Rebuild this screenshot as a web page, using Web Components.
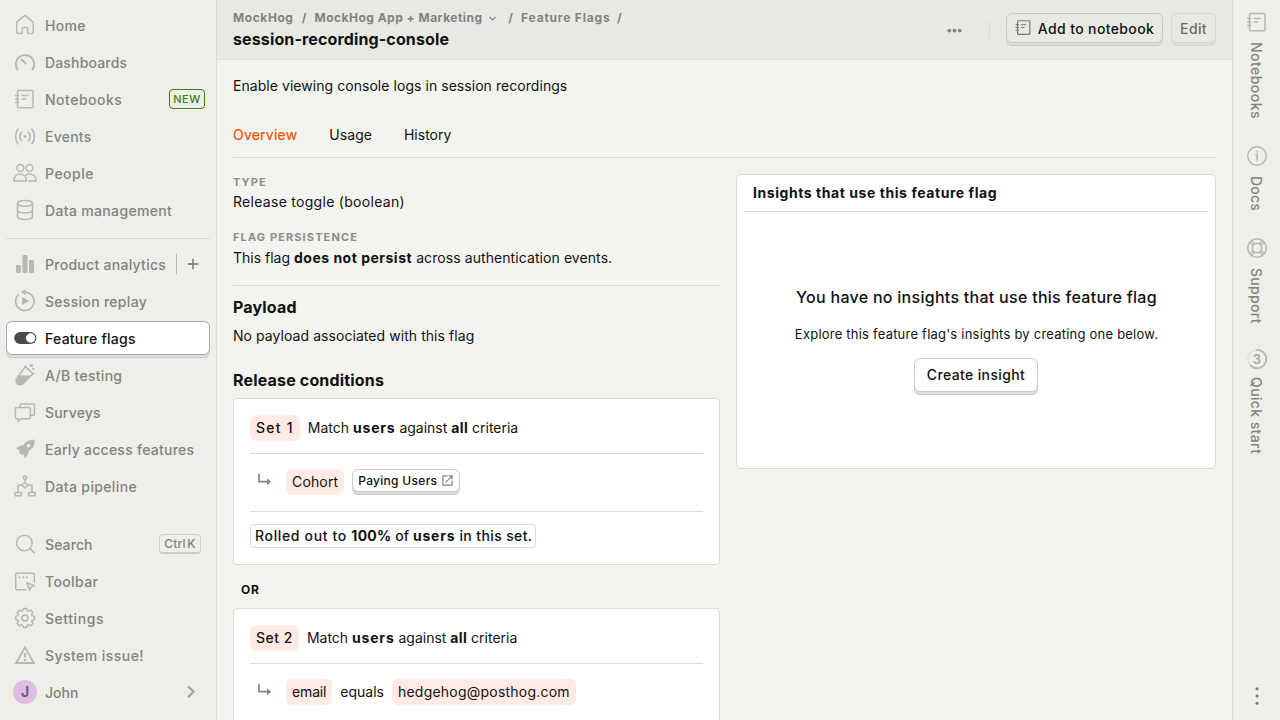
<!DOCTYPE html>
<html lang="en">
<head>
<meta charset="utf-8">
<title>session-recording-console</title>
<style>
html,body{margin:0;height:100%;overflow:hidden}
body{font-family:Inter,"Liberation Sans",sans-serif;font-size:14px;line-height:20px;color:#111;
--muted:#82837e;--icon:#b6b8b2;--border:#dadbd2;--orange:#f54e00;--side:#eeefe9}
</style>
</head>
<body>
<flag-app></flag-app>
<script>
const ICONS={
home:'<path d="M12 2.4 3.7 9.2v10.3q0 .9.9.9h3.8q.9 0 .9-.9v-4.1q0-.9.9-.9h3.6q.9 0 .9.9v4.1q0 .9.9.9h3.8q.9 0 .9-.9V9.2z"/>',
dash:'<path stroke-width="1.9" d="M4.6 19.6a9.2 9.2 0 1 1 14.8 0"/><path stroke-width="2.1" d="m8.6 9.4 3.9 3.9"/>',
note:'<rect x="4.5" y="3.5" width="15.5" height="17.3" rx=".9"/><path d="M2.6 8.4h3.2M2.6 12h3.2M2.6 15.5h3.2M9.2 8.5h5.8M9.2 12h3.5"/>',
events:'<circle cx="12" cy="12.5" r="1.5" fill="currentColor" stroke="none"/><path stroke-width="1.6" d="M5 5.2c-3.2 4.3-3.2 10.3 0 14.6M19 5.2c3.2 4.3 3.2 10.3 0 14.6M8.5 8.4c-2.2 2.2-2.2 6 0 8.2M15.5 8.4c2.2 2.2 2.2 6 0 8.2"/>',
people:'<circle cx="7.4" cy="7" r="3.4"/><circle cx="16.5" cy="7" r="3.4"/><path d="M.9 20.1c0-4.800 2.900-7 6.200-7s6.200 2.200 6.200 7zM12.600 14.300c1-.800 2.400-1.200 4-1.200 3.500 0 6.500 2.400 6.500 7H16"/>',
db:'<ellipse cx="12" cy="5.300" rx="7.500" ry="2.900"/><path d="M4.500 5.300v13c0 1.900 3.300 3.100 7.500 3.100s7.500-1.200 7.500-3.100v-13M4.500 11.700c0 1.900 3.300 3.100 7.500 3.100s7.500-1.200 7.500-3.100"/>',
bars:'<g fill="currentColor" stroke="none"><rect x="3" y="13" width="4.900" height="8" rx="1.200"/><rect x="9.500" y="3" width="5" height="18" rx="1.200"/><rect x="16" y="8" width="5" height="13" rx="1.200"/></g>',
replay:'<path stroke-width="1.700" d="M10.500 3.200a9.200 9.200 0 1 1-5.200 2.600"/><path fill="currentColor" stroke="none" d="M12.600 0v6.200L8 3.100zM9 7.900l7.300 4.100L9 16z"/>',
toggle:'<rect x="1.200" y="5.900" width="22.200" height="12.200" rx="6.100" fill="currentColor" stroke="none"/><circle cx="17.600" cy="12" r="4.700" fill="#fff" stroke="none"/>',
tube:'<path d="m12.400 3.600 7.500 7.200-9.600 9.800a4.100 4.100 0 0 1-6-5.800zM11.700 3.800l1-.9M19.400 11.500l1.500-1.200"/><path fill="currentColor" stroke="none" d="M6.300 12.600H18l-7.300 8a4.300 4.300 0 0 1-6.400-6z"/><circle cx="18.400" cy="2.500" r="1.600" fill="currentColor" stroke="none"/><circle cx="20.300" cy="6" r="1.100" fill="currentColor" stroke="none"/>',
survey:'<path d="M3.400 7.600h12.900q1 0 1 1v9.200q0 1-1 1H8.200l-3.100 2.300v-2.300H3.400q-1 0-1-1V8.600q0-1 1-1z"/><path d="M7.200 7.500V4.900q0-1 1-1h12.200q1 0 1 1v9.300q0 1-1 1h-3"/>',
rocket:'<path fill="currentColor" fill-rule="evenodd" stroke="none" d="M21.700 2.800c-5.500-.1-9.200 1.500-11.300 5.500-3 0-5 .9-7.300 3.800 1.500.2 2.700.6 3.700 1.300l-.8 2 2.600 2.600 2-.7c.5 1.200.7 2.400 1 4 2.700-2.100 3.800-4.300 4.100-7.500 4.600-2.400 6.200-5.600 6-11zM15.400 7a1.700 1.700 0 1 1 0 3.400 1.700 1.700 0 0 1 0-3.400z"/>',
pipe:'<circle cx="12" cy="3.600" r="1.700"/><path d="M12 5.300v3.400M12 8.500l3.400 2.700-3.400 2.700-3.400-2.700zM8.600 11.300H5v7M15.400 11.300H19v7M1.900 18.400h6.400v3.300H1.900zM15.700 18.400h6.400v3.300h-6.400z"/>',
search:'<circle cx="11.400" cy="11" r="7.800"/><path stroke-width="1.700" d="m17 16.700 4 3.900"/>',
toolbar:'<path d="M21.300 13.200V5.100q0-.9-.9-.9H3.600q-.9 0-.9.900v14.700q0 .9.900.9H12.500"/><path stroke-width="1.600" d="m13.800 13.800 7.500 2.700-3.200 1.400-1.400 3.200z"/><path stroke-width="1.700" stroke-linecap="butt" d="M5.600 8.400h1.700M9.300 8.400h1.700M13 8.400h1.700"/>',
gear:'<path d="M10.300 2.600h3.400l.7 2.300 1 .4 2.100-1.200 2.400 2.400-1.200 2.100.4 1 2.300.7v3.400l-2.300.7-.4 1 1.200 2.100-2.400 2.400-2.100-1.200-1 .4-.7 2.300h-3.400l-.7-2.300-1-.4-2.100 1.200-2.400-2.400 1.200-2.100-.4-1-2.300-.7v-3.400l2.300-.7.4-1-1.200-2.100 2.400-2.400 2.100 1.200 1-.4z"/><circle cx="12" cy="12" r="3"/>',
warn:'<path stroke-linejoin="miter" stroke-width="1.800" d="M12 4.400 3.100 20h17.800z"/><path stroke-width="2.100" stroke-linecap="butt" d="M12 10v4.500M12 16v2"/>',
right:'<path stroke-width="2.300" stroke-linecap="butt" stroke-linejoin="miter" d="m9.100 6.400 5.500 5.400-5.500 5.400"/>',
down:'<path stroke-width="3" stroke-linecap="butt" stroke-linejoin="miter" d="m4 8 8 8 8-8"/>',
plus:'<path stroke-width="2" stroke-linecap="butt" d="M12 6.300v11.400M6.300 12h11.400"/>',
dots:'<g fill="currentColor" stroke="none"><circle cx="3.700" cy="12" r="3"/><circle cx="12" cy="12" r="3"/><circle cx="20.300" cy="12" r="3"/></g>',
vdots:'<g fill="currentColor" stroke="none"><circle cx="12" cy="4.800" r="1.500"/><circle cx="12" cy="12" r="1.500"/><circle cx="12" cy="19.200" r="1.500"/></g>',
sub:'<path stroke-width="2.300" stroke-linecap="butt" stroke-linejoin="miter" d="M5.300 4v10.200h12"/><path fill="currentColor" stroke="none" d="m16 9.500 5.500 4.700-5.500 4.700z"/>',
open:'<path stroke-width="2.200" stroke-linecap="butt" stroke-linejoin="miter" d="M12 3.500H3.500v17h17V12M14 3.500h6.500V10M20.500 3.500 8.500 15.500"/>',
info:'<circle cx="12" cy="12" r="9.300"/><path stroke-width="1.700" stroke-linecap="butt" d="M10.300 10.700h1.900v6M12.200 7v1.800"/>',
support:'<circle cx="12" cy="12" r="9.300"/><circle cx="12" cy="12" r="4.700"/><path stroke-width="1.400" d="m4.600 6.400 3.300 2.900M6.500 4.500l2.900 3.300M19.400 6.400l-3.300 2.900M17.500 4.500l-2.900 3.300M4.600 17.600l3.300-2.900M6.500 19.500l2.900-3.300M19.400 17.600l-3.300-2.900M17.500 19.500l-2.900-3.300"/>',
ring:'<circle cx="12" cy="12" r="9.200" stroke="#dddfd8" stroke-width="1.500"/><path stroke-width="1.800" d="M12 2.800a9.200 9.200 0 1 1-6.500 15.700"/>'
};
function define(name,css,html){
  customElements.define(name,class extends HTMLElement{
    constructor(){super();this.attachShadow({mode:'open'});}
    connectedCallback(){
      const body=typeof html==='function'?html(this):html;
      this.shadowRoot.innerHTML='<style>*{box-sizing:border-box}'+css+'</style>'+body;
    }
  });
}
define('ui-icon',':host{display:block;flex:none;width:24px;height:24px}svg{display:block;width:100%;height:100%;overflow:visible}',
  e=>'<svg viewBox="0 0 24 24" fill="none" stroke="currentColor" stroke-width="1.5" stroke-linecap="round" stroke-linejoin="round">'+ICONS[e.getAttribute('name')]+'</svg>');
/* track: extra letter-spacing in px for a run of text */
define('t-x',':host{display:inline}',e=>{e.style.letterSpacing=(e.getAttribute('s')||0)+'px';return '<slot></slot>';});
define('nav-item',`:host{display:block;height:37px;padding-top:1px;box-sizing:border-box;color:var(--muted);font-weight:500}
.b{display:flex;align-items:center;height:34px;padding:0 6px;gap:8px;border:1px solid transparent;border-radius:6px}
ui-icon{color:var(--icon)} .l{flex:1;white-space:nowrap;padding-top:1px}
:host([active]) .b{background:#fff;border-color:#a9a9a9;box-shadow:0 2px 0 #e0dddf,0 3px 0 #c8c7c6}
:host([active]){color:#111}:host([active]) ui-icon{color:#4b4b4b}
.a{width:24px;height:24px;border-radius:50%;background:#dfbde3;color:#78567d;display:flex;align-items:center;justify-content:center;font-weight:700}`,
  e=>'<div class="b">'+(e.getAttribute('avatar')?'<span class="a">'+e.getAttribute('avatar')+'</span>':'<ui-icon name="'+e.getAttribute('icon')+'"></ui-icon>')+'<span class="l" style="letter-spacing:'+(e.getAttribute('track')||.2)+'px"><slot></slot></span><slot name="end"></slot></div>');
define('app-sidebar',`:host{display:flex;flex-direction:column;width:217px;flex:none;background:var(--side);border-right:1px solid var(--border);padding:7px 6px 9px;box-sizing:border-box}
hr{border:0;border-top:1px solid var(--border);margin:9px 0 7px;width:100%}
.bottom{margin-top:21px}
.new{box-sizing:border-box;width:36px;height:20px;border:1px solid #388600;color:#388600;border-radius:4px;font-size:11px;line-height:18px;text-align:center;letter-spacing:.45px;margin:0 -2px 0 0}
.key{box-sizing:border-box;width:42px;height:20px;border:1px solid #cccdc8;border-bottom-width:2px;border-radius:4px;font-size:12px;line-height:18px;text-align:center;letter-spacing:.2px;margin:0 2px 0 0;white-space:nowrap;word-spacing:-2px}
.add{display:flex;align-items:center;border-left:1px solid #b9bab5;height:20px;padding-left:5px;margin-right:-1px}
.add ui-icon{width:22px;height:22px;color:#8b8c87}
.chev{color:#a5a6a1}`,
`<nav-item icon="home" track=".3">Home</nav-item><nav-item icon="dash" track=".16">Dashboards</nav-item>
<nav-item icon="note" track=".5">Notebooks<span slot="end" class="new">NEW</span></nav-item>
<nav-item icon="events" track=".25">Events</nav-item><nav-item icon="people" track=".5">People</nav-item><nav-item icon="db" track=".34">Data management</nav-item>
<hr><nav-item icon="bars" track=".28">Product analytics<span slot="end" class="add"><ui-icon name="plus"></ui-icon></span></nav-item>
<nav-item icon="replay" track=".3">Session replay</nav-item><nav-item icon="toggle" track=".26" active>Feature flags</nav-item>
<nav-item icon="tube" track=".3">A/B testing</nav-item><nav-item icon="survey">Surveys</nav-item>
<nav-item icon="rocket" track=".26">Early access features</nav-item><nav-item icon="pipe" track=".36">Data pipeline</nav-item>
<div class="bottom"><nav-item icon="search" track=".1">Search<span slot="end" class="key">Ctrl K</span></nav-item>
<nav-item icon="toolbar" track=".38">Toolbar</nav-item><nav-item icon="gear" track=".55">Settings</nav-item><nav-item icon="warn" track=".45">System issue!</nav-item>
<nav-item avatar="J" track=".05">John<ui-icon slot="end" class="chev" name="right"></ui-icon></nav-item></div>`);
define('chrome-button',`:host{display:flex;align-items:center;justify-content:center;gap:6px;box-sizing:border-box;flex:none;height:34px;border:1px solid var(--edge,#c9c8c9);border-radius:6px;box-shadow:0 2px 0 #e0dddf,0 3px 0 var(--edge,#c9c8c9);font-weight:500;white-space:nowrap;background:var(--face,#fff)}`,'<slot></slot>');
define('top-bar',`:host{display:flex;height:60px;box-sizing:border-box;background:#e8e9e3;border-bottom:1px solid #dfe0d9;padding:0 16px;align-items:flex-start}
.t{flex:1;padding-top:8px}.c{display:flex;align-items:center;height:20px;font-size:12px;font-weight:700;color:var(--muted);white-space:nowrap}
.c i{font-style:normal;width:21px;text-align:center}.c ui-icon{width:9px;height:9px;margin:0 3.500px 0 5px}
h1{margin:1px 0 0;font-size:16px;line-height:20px;font-weight:700;letter-spacing:.13px}
.r{display:flex;align-items:center;margin-top:13px;height:30px}.r>ui-icon{width:15px;height:15px;color:#83847f;margin-top:4px}
.v{width:1px;height:17px;background:#d9dad4;margin:2px 16px 0 27px}
chrome-button{height:30px;--face:#e8e9e3;padding-top:2px}`,
`<div class="t"><div class="c"><t-x s=".58">MockHog</t-x><i>/</i><t-x s=".48">MockHog App + Marketing</t-x><ui-icon name="down"></ui-icon><i>/</i><t-x s=".8">Feature Flags</t-x><i style="width:18px">/</i></div><h1>session-recording-console</h1></div>
<div class="r"><ui-icon name="dots"></ui-icon><span class="v"></span>
<chrome-button style="width:157px"><ui-icon name="note" style="width:19px;height:19px;color:#777873;margin:-4px -1px 0 -1px"></ui-icon><t-x s=".38">Add to notebook</t-x></chrome-button>
<chrome-button style="width:45px;margin-left:8px;--edge:#d7d7d3;color:#6c6d69"><t-x s=".35">Edit</t-x></chrome-button></div>`);
define('flag-tabs',':host{display:flex;gap:32px;height:44px;box-sizing:border-box;border-bottom:1px solid var(--border);padding-top:11px}.on{color:var(--orange);-webkit-text-stroke:.2px}','<t-x class="on" s=".22">Overview</t-x><t-x s=".04">Usage</t-x><t-x>History</t-x>');
define('flag-tag',':host{display:block;background:#ffebe4;border-radius:6px;padding:3px 6px;height:26px;box-sizing:border-box;white-space:nowrap}','<slot></slot>');
define('condition-set',`:host{display:block;box-sizing:border-box;background:#fff;border:1px solid var(--border);border-radius:4px;padding:16px}
.h{display:flex;align-items:center;gap:8px;height:38px;padding-bottom:12px}
flag-tag{font-weight:500}.m{white-space:nowrap}
.q{display:flex;align-items:flex-start;height:58px;gap:8px;border-top:1px solid var(--border);padding:15px 0 0 5px}
.q ui-icon{width:18px;height:18px;color:#86868a;margin:2px 5px 0 0}
.f{border-top:1px solid var(--border);padding-top:12px}`,
  e=>'<div class="h"><flag-tag><t-x s="'+e.getAttribute('track')+'">'+e.getAttribute('label')+'</t-x></flag-tag><span class="m">Match <b><t-x s=".8">users</t-x></b> against <b><t-x s=".35">all</t-x></b> criteria</span></div><div class="q"><ui-icon name="sub"></ui-icon><slot></slot></div><div class="f"><slot name="rollout"></slot></div>');
define('insight-card',`:host{display:flex;flex-direction:column;align-items:center;width:480px;height:295px;flex:none;box-sizing:border-box;background:#fff;border:1px solid var(--border);border-radius:6px;padding:0 8px}
h2{align-self:stretch;margin:0;height:37px;line-height:36px;padding-left:8px;font-size:14px;letter-spacing:.56px;border-bottom:1px solid var(--border);font-weight:700}
h3{margin:75px 0 0;font-size:16px;line-height:20px;font-weight:500;letter-spacing:.28px;padding-left:1px}
p{margin:17px 0 14px;font-size:13px;letter-spacing:.22px;padding-left:1px}`,
`<h2>Insights that use this feature flag</h2><h3>You have no insights that use this feature flag</h3><p>Explore this feature flag's insights by creating one below.</p><chrome-button style="width:124px"><t-x s=".37">Create insight</t-x></chrome-button>`);
define('flag-details',`:host{display:block;width:487px}
h4{margin:0;font-size:11px;line-height:16px;letter-spacing:1.12px;color:#8b8c88;font-weight:700}
hr{border:0;border-top:1px solid var(--border);margin:17px 0 11px}h2{margin:0;font-size:16px;line-height:20px;font-weight:700;letter-spacing:.17px}
.or{font-size:12px;font-weight:700;padding:15px 0 8px 8px;height:43px;letter-spacing:.8px}
.roll{display:inline-block;height:24px;width:286px;line-height:22px;border:1px solid var(--border);border-radius:4px;padding:0 4px;font-weight:500;white-space:nowrap}
chrome-button{height:23px;width:108px;font-size:12px}`,
`<h4>TYPE</h4><div style="margin:2px 0 17px;letter-spacing:.29px">Release toggle (boolean)</div><h4>FLAG PERSISTENCE</h4><div style="margin-top:3px">This flag <b><t-x s=".5">does not persist</t-x></b><t-x s=".08"> across authentication events.</t-x></div>
<hr><h2>Payload</h2><div style="margin:9px 0 24px;letter-spacing:.06px">No payload associated with this flag</div><h2 style="margin-bottom:8px">Release conditions</h2>
<condition-set label="Set 1" track="1.25" style="height:167px"><flag-tag><t-x s=".15">Cohort</t-x></flag-tag><chrome-button><t-x s=".3">Paying Users</t-x><ui-icon name="open" style="width:13px;height:13px;color:#85858a;margin-left:-2px"></ui-icon></chrome-button><span slot="rollout" class="roll"><t-x s=".65">Rolled out to </t-x><b><t-x s=".3">100%</t-x></b> of <b><t-x s=".8">users</t-x></b><t-x s=".38"> in this set.</t-x></span></condition-set>
<div class="or">OR</div>
<condition-set label="Set 2" track=".5"><flag-tag><t-x s="-.15">email</t-x></flag-tag><span style="padding-top:3px">equals</span><flag-tag><t-x s=".22">hedgehog@posthog.com</t-x></flag-tag></condition-set>`);
define('side-panel',`:host{display:flex;flex-direction:column;align-items:center;width:48px;flex:none;box-sizing:border-box;border-left:1px solid var(--border);background:var(--side);color:var(--muted);font-weight:500;padding:10px 0 12px 1px;letter-spacing:.2px}
ui-icon{color:var(--icon)}.t{writing-mode:vertical-rl;white-space:nowrap;line-height:20px;margin:8px 2px 0 0}
.q{display:grid;place-items:center;color:#a5a6a1;font-size:13px;font-weight:600}.q>*{grid-area:1/1}`,
`<ui-icon name="note"></ui-icon><span class="t" style="height:102px;letter-spacing:.46px">Notebooks</span><ui-icon name="info"></ui-icon><span class="t" style="height:60px">Docs</span><ui-icon name="support"></ui-icon><span class="t" style="height:79px;letter-spacing:.3px">Support</span><span class="q"><ui-icon name="ring"></ui-icon><span>3</span></span><span class="t" style="margin-top:6px;letter-spacing:.38px">Quick start</span><ui-icon name="vdots" style="margin-top:auto;color:#777873"></ui-icon>`);
define('flag-app',`:host{display:flex;width:1280px;height:720px;overflow:hidden;background:#f3f4ef}
main{flex:1;min-width:0;overflow:hidden}.c{padding:16px 16px 0}.cols{display:flex;gap:16px;align-items:flex-start;padding-top:16px}`,
`<app-sidebar></app-sidebar><main><top-bar></top-bar><div class="c"><div style="margin-bottom:18px;letter-spacing:.05px">Enable viewing console logs in session recordings</div><flag-tabs></flag-tabs><div class="cols"><flag-details></flag-details><insight-card></insight-card></div></div></main><side-panel></side-panel>`);
</script>
</body>
</html>
